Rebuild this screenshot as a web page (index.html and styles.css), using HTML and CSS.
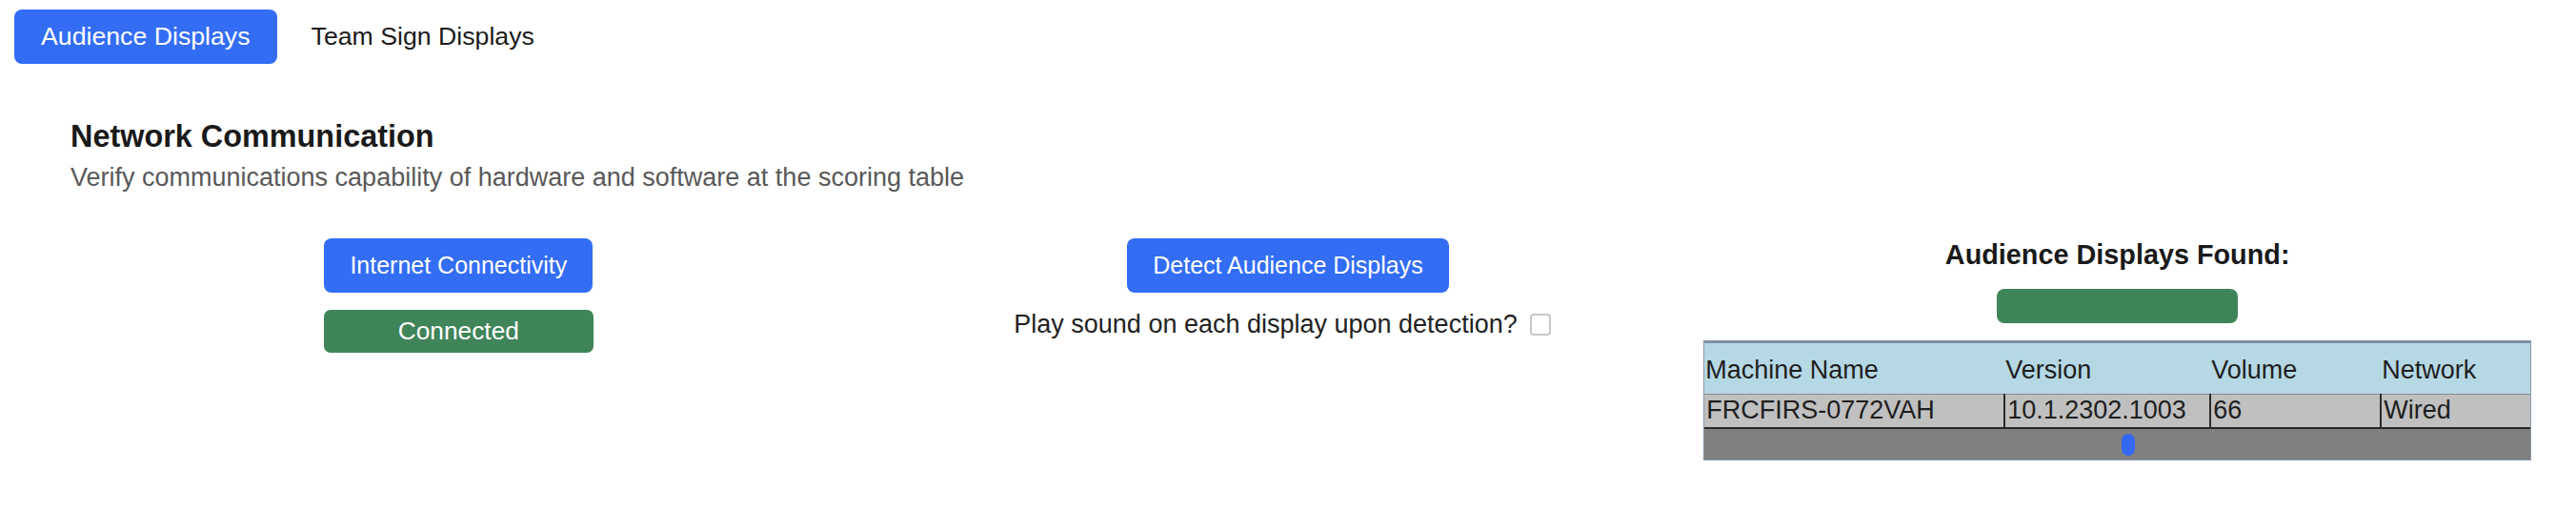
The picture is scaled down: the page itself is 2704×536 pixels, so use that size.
FILE: index.html
```html
<!DOCTYPE html>
<html>
<head>
<meta charset="utf-8">
<link rel="stylesheet" href="styles.css">
</head>
<body>
<nav class="tabs">
  <button class="tab tab-active">Audience Displays</button>
  <button class="tab">Team Sign Displays</button>
</nav>
<main class="page">
  <header class="intro">
    <h2 class="title">Network Communication</h2>
    <p class="subtitle">Verify communications capability of hardware and software at the scoring table</p>
  </header>
  <section class="columns">
    <div class="col">
      <button class="btn">Internet Connectivity</button>
      <div class="status">Connected</div>
    </div>
    <div class="col">
      <button class="btn">Detect Audience Displays</button>
      <label class="sound">Play sound on each display upon detection? <input type="checkbox" class="check"></label>
    </div>
    <div class="col">
      <h3 class="found">Audience Displays Found:</h3>
      <div class="bar"></div>
      <div class="table-wrap">
        <table class="grid">
          <thead>
            <tr><th class="c1">Machine Name</th><th class="c2">Version</th><th class="c3">Volume</th><th class="c4">Network</th></tr>
          </thead>
          <tbody>
            <tr><td>FRCFIRS-0772VAH</td><td>10.1.2302.1003</td><td>66</td><td>Wired</td></tr>
          </tbody>
        </table>
        <div class="scroll"><span class="thumb"></span></div>
      </div>
    </div>
  </section>
</main>
</body>
</html>
```
FILE: styles.css
```css
* { box-sizing: border-box; }
html, body { margin: 0; padding: 0; background: #ffffff; }
body { font-family: "Liberation Sans", Arial, sans-serif; color: #212529; }

.tabs { display: flex; gap: 8px; padding: 10px 0 0 15px; }
.tab {
  font-family: "Liberation Sans", Arial, sans-serif;
  font-size: 26.7px; height: 57px; padding: 0 28px; border: 0; border-radius: 8px;
  background: transparent; color: #1b1b1b; line-height: 57px;
}
.tab-active { background: #336df4; color: #ffffff; }

.page { padding: 0 46px; }
.intro { padding-left: 28px; margin-top: 57px; }
.title { margin: 0; font-size: 32.4px; line-height: 38px; font-weight: bold; color: #1a1a1a; }
.subtitle { margin: 4px 0 0; font-size: 27px; line-height: 40px; color: #595959; }

.columns { display: grid; grid-template-columns: repeat(3, 1fr); margin-top: 44px; }
.col { display: flex; flex-direction: column; align-items: center; }

.btn {
  font-family: "Liberation Sans", Arial, sans-serif;
  font-size: 25px; height: 57px; padding: 0 27px; border: 0; border-radius: 8px;
  background: #336df4; color: #ffffff; line-height: 57px;
}
.status {
  margin-top: 18px; width: 283px; height: 45px; border-radius: 7px;
  background: #40845a; color: #ffffff; font-size: 26.3px; line-height: 45px; text-align: center;
}
.sound { margin-top: 13px; font-size: 27px; line-height: 40px; color: #222; display: flex; align-items: center; gap: 13px; }
.check {
  appearance: none; -webkit-appearance: none; margin: 0 12px 0 0;
  width: 22px; height: 23px; border: 2px solid #c4c8cc; border-radius: 4px; background: #fff;
}

.found { margin: 0; font-size: 28.8px; line-height: 35px; font-weight: bold; color: #1a1a1a; }
.bar { margin-top: 18px; width: 253px; height: 36px; border-radius: 8px; background: #40845a; }

.table-wrap { margin-top: 18px; width: 869px; border: 1px solid #8797ab; border-top: 3px solid #7f8fa4; }
.grid { width: 100%; border-collapse: collapse; table-layout: fixed; font-size: 27px; color: #1e1e1e; }
.grid th { background: #b5d8e4; font-weight: normal; text-align: left; height: 53px; padding: 4px 0 0 1px; }
.grid td { background: #c0c0c0; height: 36px; padding: 0 0 0 2px; border-top: 1px solid #8a8a8a; border-bottom: 2px solid #2a2a2a; }
.grid td + td { border-left: 2px solid #2a2a2a; }
.c1 { width: 315px; }
.c2 { width: 216px; }
.c3 { width: 179px; }
.scroll { height: 32px; background: #808080; padding: 5px 0 0 438px; }
.thumb { display: block; width: 14px; height: 23px; border-radius: 7px; background: #3369f0; }
```
